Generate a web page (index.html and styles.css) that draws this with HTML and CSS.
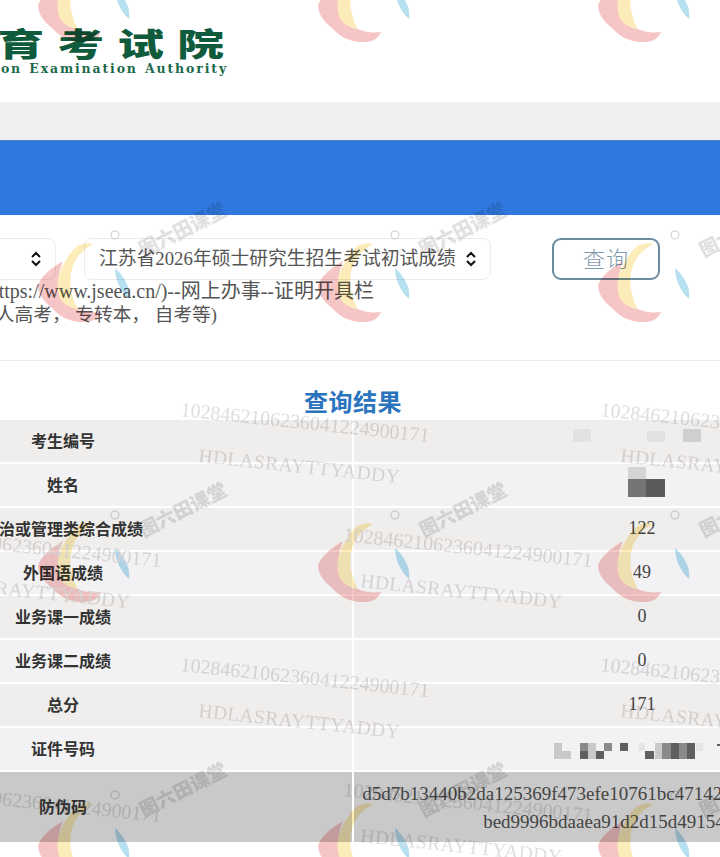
FILE: index.html
```html
<!DOCTYPE html>
<html lang="zh-CN">
<head>
<meta charset="utf-8">
<title>查询结果</title>
<link rel="stylesheet" href="styles.css">
</head>
<body>
<div class="page">
  <header class="brand">
    <div class="brand-cn"><span>江苏省教育考试院</span></div>
    <div class="brand-en"><span>Jiangsu Education Examination Authority</span></div>
  </header>
  <div class="band"></div>
  <div class="hero"></div>
  <section class="query">
    <div class="controls">
      <div class="select select-short">
        <svg class="updown" viewBox="0 0 12 16"><path d="M2 6l4-4 4 4M2 10l4 4 4-4"/></svg>
      </div>
      <div class="select select-long">
        <span class="select-text">江苏省2026年硕士研究生招生考试初试成绩</span>
        <svg class="updown" viewBox="0 0 12 16"><path d="M2 6l4-4 4 4M2 10l4 4 4-4"/></svg>
      </div>
      <button class="search">查询</button>
    </div>
    <div class="notes">
      <p class="note note-a"><span>江苏省教育考试院网站(https://www.jseea.cn/)--网上办事--证明开具栏</span></p>
      <p class="note note-b"><span>(含成人高考， 专转本， 自考等)</span></p>
    </div>
  </section>
  <section class="result">
    <h2 class="result-title">查询结果</h2>
    <table class="grades">
      <tr class="odd"><th>考生编号</th><td></td></tr>
      <tr class="even"><th>姓名</th><td></td></tr>
      <tr class="odd"><th>政治或管理类综合成绩</th><td>122</td></tr>
      <tr class="even"><th>外国语成绩</th><td>49</td></tr>
      <tr class="odd"><th>业务课一成绩</th><td>0</td></tr>
      <tr class="even"><th>业务课二成绩</th><td>0</td></tr>
      <tr class="odd"><th>总分</th><td>171</td></tr>
      <tr class="even"><th>证件号码</th><td></td></tr>
      <tr class="seal"><th>防伪码</th><td>d5d7b13440b2da125369f473efe10761bc47142000000000000000000000<br>bed9996bdaaea91d2d15d4915400000000</td></tr>
    </table>
  </section>

  <svg class="mosaic" viewBox="0 0 720 857">
    <g fill="#e4e2e1"><rect x="573" y="429" width="18" height="13"/><rect x="647" y="431" width="18" height="11"/></g>
    <rect x="683" y="429" width="18" height="13" fill="#cfcfcf"/>
    <rect x="628" y="467" width="18" height="12" fill="#d4d4d6"/>
    <rect x="628" y="479" width="18" height="18" fill="#757374"/>
    <rect x="646" y="479" width="19" height="18" fill="#5d5a5c"/>
    <g fill="#c9c9c9">
      <rect x="554" y="743" width="8" height="16"/><rect x="562" y="751" width="9" height="8"/>
      <rect x="588" y="743" width="8" height="16"/><rect x="655" y="743" width="7" height="16"/>
    </g>
    <g fill="#e6e6e6"><rect x="638" y="743" width="7" height="8"/><rect x="696" y="743" width="7" height="8"/></g>
    <g fill="#8a8a8a">
      <rect x="580" y="743" width="8" height="8"/><rect x="604" y="743" width="8" height="8"/>
      <rect x="662" y="743" width="9" height="16"/><rect x="679" y="743" width="8" height="16"/>
    </g>
    <g fill="#5f5f5f">
      <rect x="580" y="751" width="8" height="8"/><rect x="596" y="751" width="8" height="8"/>
      <rect x="620" y="743" width="8" height="8"/><rect x="645" y="751" width="9" height="8"/>
      <rect x="671" y="743" width="8" height="16"/><rect x="687" y="743" width="8" height="16"/>
      <rect x="717" y="744" width="3" height="2"/>
    </g>
  </svg>

  <svg class="watermark" viewBox="0 0 720 857">
    <defs>
      <g id="tile">
        <path class="wm-red" d="M25 20C12 28 2 36 0 45C1 56 8 62 14 67C22 76 34 82 46 81C54 81 60 78 63 71C54 72 46 71 40 68C30 66 23 62 21 50C19 40 21 30 25 20Z"/>
        <path class="wm-yellow" d="M55 3C44 0 36 6 30 16C22 28 18 40 20 50C21 60 28 66 40 68C34 58 31 45 33 32C35 20 42 10 55 3Z"/>
        <path class="wm-drop" d="M77 27C85 34 93 46 91 58C84 52 77 40 77 27Z"/>
        <circle class="wm-reg" cx="77" cy="-6" r="4"/>
        <text class="wm-stamp" transform="translate(148 -5) rotate(-27)" text-anchor="middle">图六田课堂</text>
      </g>
      <clipPath id="below"><rect x="0" y="361" width="720" height="496"/></clipPath>
    </defs>
    <use href="#tile" x="38" y="-39"/><use href="#tile" x="318" y="-39"/><use href="#tile" x="598" y="-39"/>
    <use href="#tile" x="38" y="241"/><use href="#tile" x="318" y="241"/><use href="#tile" x="598" y="241"/>
    <use href="#tile" x="38" y="521"/><use href="#tile" x="318" y="521"/><use href="#tile" x="598" y="521"/>
    <use href="#tile" x="38" y="801"/><use href="#tile" x="318" y="801"/><use href="#tile" x="598" y="801"/>
    <g clip-path="url(#below)">
      <text class="wm-num" transform="translate(180 416) rotate(6)">1028462106236041224900171</text>
      <text class="wm-num" transform="translate(600 416) rotate(6)">1028462106236041224900171</text>
      <text class="wm-num" transform="translate(343 541) rotate(6)">1028462106236041224900171</text>
      <text class="wm-num" transform="translate(-88 541) rotate(6)">1028462106236041224900171</text>
      <text class="wm-num" transform="translate(180 671) rotate(6)">1028462106236041224900171</text>
      <text class="wm-num" transform="translate(600 671) rotate(6)">1028462106236041224900171</text>
      <text class="wm-num" transform="translate(343 796) rotate(6)">1028462106236041224900171</text>
      <text class="wm-num" transform="translate(-88 796) rotate(6)">1028462106236041224900171</text>
      <text class="wm-id" transform="translate(198 462) rotate(6)">HDLASRAYTTYADDY</text>
      <text class="wm-id" transform="translate(620 462) rotate(6)">HDLASRAYTTYADDY</text>
      <text class="wm-id" transform="translate(360 587) rotate(6)">HDLASRAYTTYADDY</text>
      <text class="wm-id" transform="translate(-72 587) rotate(6)">HDLASRAYTTYADDY</text>
      <text class="wm-id" transform="translate(198 717) rotate(6)">HDLASRAYTTYADDY</text>
      <text class="wm-id" transform="translate(620 717) rotate(6)">HDLASRAYTTYADDY</text>
      <text class="wm-id" transform="translate(360 842) rotate(6)">HDLASRAYTTYADDY</text>
      <text class="wm-id" transform="translate(-67 338) rotate(6)">HDLASRAYTTYADDY</text>
      <text class="wm-id" transform="translate(353 338) rotate(6)">HDLASRAYTTYADDY</text>
    </g>
  </svg>
</div>
</body>
</html>
```
FILE: styles.css
```css
* { box-sizing: border-box; }
html, body { margin: 0; padding: 0; background: #fff; }
body { font-family: "Liberation Serif", "Noto Sans CJK SC", serif; color: #444; }

.page {
  position: relative;
  width: 720px;
  height: 857px;
  overflow: hidden;
  background: #fff;
  filter: blur(0.45px);
}

.brand { height: 102px; padding-top: 23px; display: flex; flex-direction: column; }
.brand-cn, .brand-en { width: 228px; display: flex; justify-content: flex-end; white-space: nowrap; }
.brand-cn span {
  font-family: "Noto Sans CJK SC", sans-serif;
  font-weight: 900;
  font-size: 32px;
  line-height: 38px;
  letter-spacing: 9px;
  margin-right: -9px;
  color: #0f5b3b;
  transform: scaleX(1.46);
  transform-origin: right center;
}
.brand-en span {
  font-family: "DejaVu Serif", serif;
  font-weight: 700;
  font-size: 12.5px;
  line-height: 15px;
  letter-spacing: 1.85px;
  word-spacing: 1px;
  color: #1c6a4a;
}

.band { height: 38px; background: #f0f0f2; }
.hero { height: 75px; background: #2f78e0; border-top: 1px solid #4c86c8; }

.query { height: 146px; border-bottom: 1px solid #ececec; position: relative; }
.controls { display: flex; align-items: flex-start; padding-top: 23px; margin-left: -60px; height: 64px; }
.select {
  height: 42px;
  border: 1px solid #ececec;
  border-radius: 8px;
  background: #fff;
  display: flex;
  align-items: center;
  justify-content: flex-end;
  padding-right: 13px;
}
.select-short { width: 116px; margin-right: 28px; }
.select-long { width: 407px; margin-right: 61px; padding-left: 14px; gap: 7px; }
.select-text {
  flex: 1;
  overflow: hidden;
  white-space: nowrap;
  font-size: 18.8px;
  line-height: 40px;
  color: #555;
}
.updown { width: 12px; height: 16px; flex: none; }
.updown path { fill: none; stroke: #111; stroke-width: 2; }
.search {
  width: 108px;
  height: 42px;
  padding: 0 0 5px;
  background: transparent;
  border: 2px solid #6b8ba1;
  border-radius: 9px;
  color: #7f9aac;
  font-family: "Noto Sans CJK SC", sans-serif;
  font-weight: 300;
  font-size: 22px;
  letter-spacing: 1px;
}
.notes { display: flex; flex-direction: column; }
.note { margin: 0; display: flex; justify-content: flex-end; white-space: nowrap; line-height: 24px; color: #555; }
.note-a { width: 374px; font-size: 20px; }
.note-b { width: 217px; font-size: 18.7px; }

.result { width: 720px; }
.result-title {
  margin: 0;
  height: 59px;
  padding-top: 23px;
  text-align: center;
  transform: translateX(-7px);
  font-family: "Noto Sans CJK SC", sans-serif;
  font-weight: 700;
  font-size: 24px;
  line-height: 34px;
  color: #2a73bd;
  letter-spacing: 0.5px;
}
.grades {
  width: 1154px;
  margin-left: -224px;
  border-collapse: separate;
  border-spacing: 0;
  table-layout: fixed;
}
.grades th, .grades td {
  height: 44px;
  padding: 0 0 3px;
  text-align: center;
  border-bottom: 2px solid #fff;
}
.grades th {
  width: 578px;
  padding-right: 2px;
  border-right: 2px solid #fff;
  font-family: "Noto Sans CJK SC", sans-serif;
  font-weight: 700;
  font-size: 16px;
  color: #333;
}
.grades td { font-size: 18px; line-height: 28px; color: #444; }
.odd { background: #f0eeec; }
.even { background: #f2f2f4; }
.seal { background: #c9c9c9; }
.grades .seal th, .grades .seal td { height: 70px; border-bottom: 0; }
.grades .seal td { font-size: 19px; padding: 2px 0 0; }

.mosaic, .watermark {
  position: absolute;
  left: 0;
  top: 0;
  width: 720px;
  height: 857px;
  pointer-events: none;
}
.watermark { mix-blend-mode: multiply; filter: blur(0.5px); }
.wm-red { fill: #f6c6c6; }
.wm-yellow { fill: #fcecb9; }
.wm-drop { fill: #b7e0f1; }
.wm-reg { fill: none; stroke: #dcdcdc; stroke-width: 1.5; }
.wm-stamp { font-family: "Noto Sans CJK SC", sans-serif; font-weight: 900; font-size: 19px; fill: #e0e0e0; }
.wm-num { font-family: "Liberation Serif", serif; font-size: 20px; fill: #e0dede; }
.wm-id { font-family: "Liberation Serif", serif; font-size: 19.5px; letter-spacing: 0.4px; fill: #e0dede; }
```
